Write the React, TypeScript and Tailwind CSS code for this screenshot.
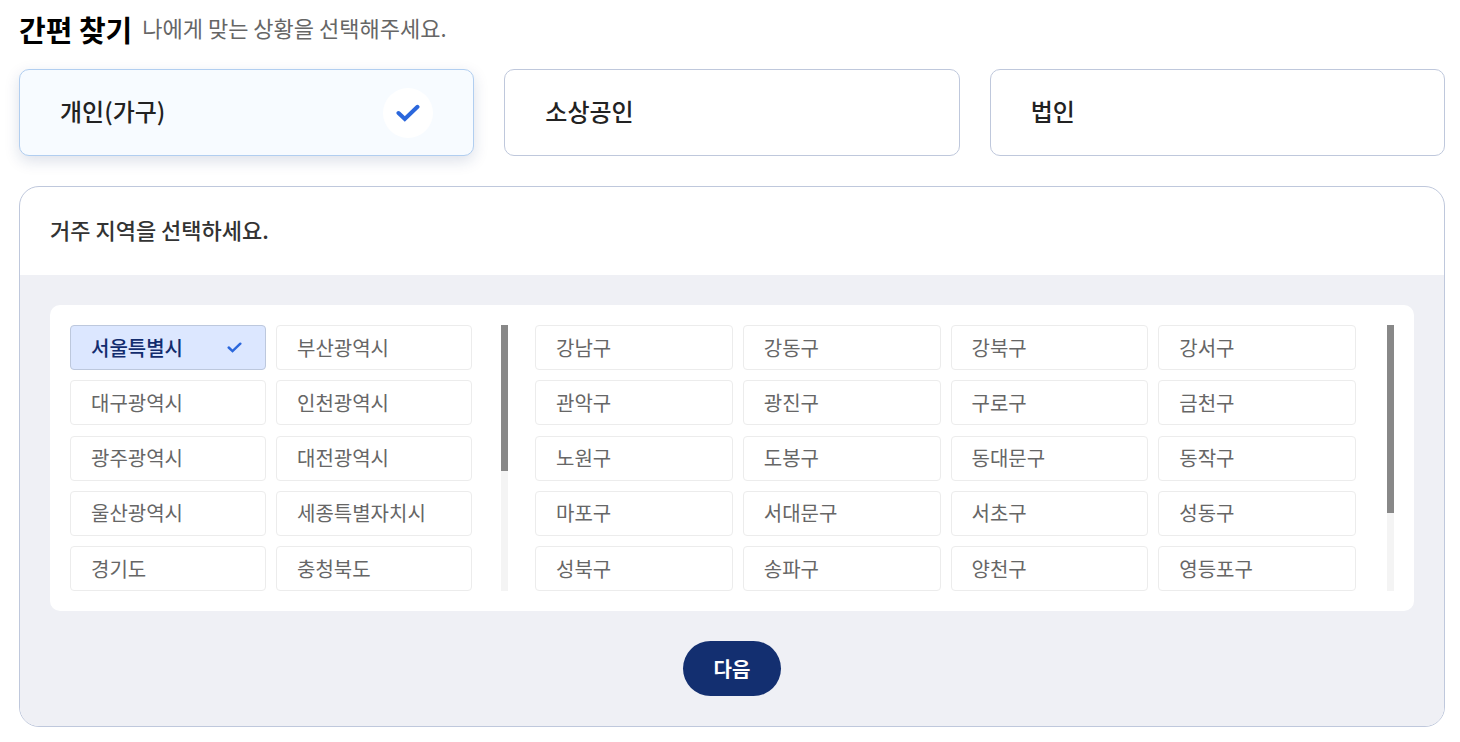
import React, { useState } from "react";
import clsx from "clsx";

const TYPES = ["개인(가구)", "소상공인", "법인"];

const CITIES = [
  "서울특별시",
  "부산광역시",
  "대구광역시",
  "인천광역시",
  "광주광역시",
  "대전광역시",
  "울산광역시",
  "세종특별자치시",
  "경기도",
  "충청북도",
];

const DISTRICTS = [
  "강남구",
  "강동구",
  "강북구",
  "강서구",
  "관악구",
  "광진구",
  "구로구",
  "금천구",
  "노원구",
  "도봉구",
  "동대문구",
  "동작구",
  "마포구",
  "서대문구",
  "서초구",
  "성동구",
  "성북구",
  "송파구",
  "양천구",
  "영등포구",
];

function Check({ className }: { className: string }) {
  return (
    <svg viewBox="0 0 24 18" fill="none" className={className} aria-hidden="true">
      <path d="M2.5 9 L8.8 15 L21.5 2.8" stroke="#2b67dc" strokeWidth="4" strokeLinecap="round" />
    </svg>
  );
}

type OptionProps = {
  label: string;
  selected: boolean;
  onClick: () => void;
};

function TypeCard({ label, selected, onClick }: OptionProps) {
  return (
    <button
      type="button"
      aria-pressed={selected}
      onClick={onClick}
      className={clsx(
        "flex h-[87px] items-center justify-between rounded-[10px] border px-10 text-2xl font-medium text-[#222]",
        selected ? "border-[#b1cef0] bg-[#f7fbff] shadow-[0_5px_15px_rgba(20,45,110,0.15)]" : "border-[#bfc8dc] bg-white"
      )}
    >
      <span className="pb-[3px]">{label}</span>
      {selected && (
        <span className="flex h-[50px] w-[50px] items-center justify-center rounded-full bg-white">
          <Check className="h-[18px] w-6" />
        </span>
      )}
    </button>
  );
}

function RegionButton({ label, selected, onClick }: OptionProps) {
  return (
    <button
      type="button"
      aria-pressed={selected}
      onClick={onClick}
      className={clsx(
        "flex h-[45px] items-center justify-between rounded border px-5 text-xl",
        selected ? "border-[#bdc8dd] bg-[#dce7ff] font-medium text-[#122c6e]" : "border-[#ececec] bg-white text-[#666]"
      )}
    >
      {label}
      {selected && <Check className="mr-[3px] h-[11px] w-[15px]" />}
    </button>
  );
}

function ScrollBar({ thumb }: { thumb: string }) {
  return (
    <div className="w-[7px] shrink-0 bg-[#f4f4f4]">
      <div className={clsx("bg-[#888]", thumb)}></div>
    </div>
  );
}

function App() {
  const [type, setType] = useState("개인(가구)");
  const [city, setCity] = useState("서울특별시");
  const [district, setDistrict] = useState("");

  return (
    <main className="w-full bg-white pt-2 pr-[15px] pb-[15px] pl-[19px] font-['Noto_Sans_CJK_KR','Noto_Sans',sans-serif]">
      <header className="flex h-[61px] items-start gap-[10px]">
        <h1 className="text-[29px] leading-[42px] font-bold text-black">간편 찾기</h1>
        <p className="text-[22px] leading-[38px] text-[#666]">나에게 맞는 상황을 선택해주세요.</p>
      </header>

      <div className="grid grid-cols-3 gap-[30px]">
        {TYPES.map((name) => (
          <TypeCard key={name} label={name} selected={type === name} onClick={() => setType(name)} />
        ))}
      </div>

      <section className="mt-[30px] overflow-hidden rounded-[20px] border border-[#bfc8dc]">
        <h2 className="flex h-[88px] items-center px-[30px] pb-1 text-[22px] font-medium text-[#333]">
          거주 지역을 선택하세요.
        </h2>
        <div className="flex flex-col items-center gap-[30px] bg-[#eff0f5] p-[30px]">
          <div className="grid w-full grid-cols-[438fr_859fr] gap-[27px] rounded-[10px] bg-white p-5">
            <div className="flex h-[266px] gap-[29px]">
              <div className="grid flex-1 grid-cols-2 content-between gap-x-[10px]">
                {CITIES.map((name) => (
                  <RegionButton key={name} label={name} selected={city === name} onClick={() => setCity(name)} />
                ))}
              </div>
              <ScrollBar thumb="h-[146px]" />
            </div>
            <div className="flex h-[266px] gap-[31px]">
              <div className="grid flex-1 grid-cols-4 content-between gap-x-[10px]">
                {DISTRICTS.map((name) => (
                  <RegionButton
                    key={name}
                    label={name}
                    selected={district === name}
                    onClick={() => setDistrict(name)}
                  />
                ))}
              </div>
              <ScrollBar thumb="h-[188px]" />
            </div>
          </div>
          <button type="button" className="h-[55px] rounded-full bg-[#132f70] px-[31px] text-xl font-bold text-white">
            다음
          </button>
        </div>
      </section>
    </main>
  );
}

export default App;
